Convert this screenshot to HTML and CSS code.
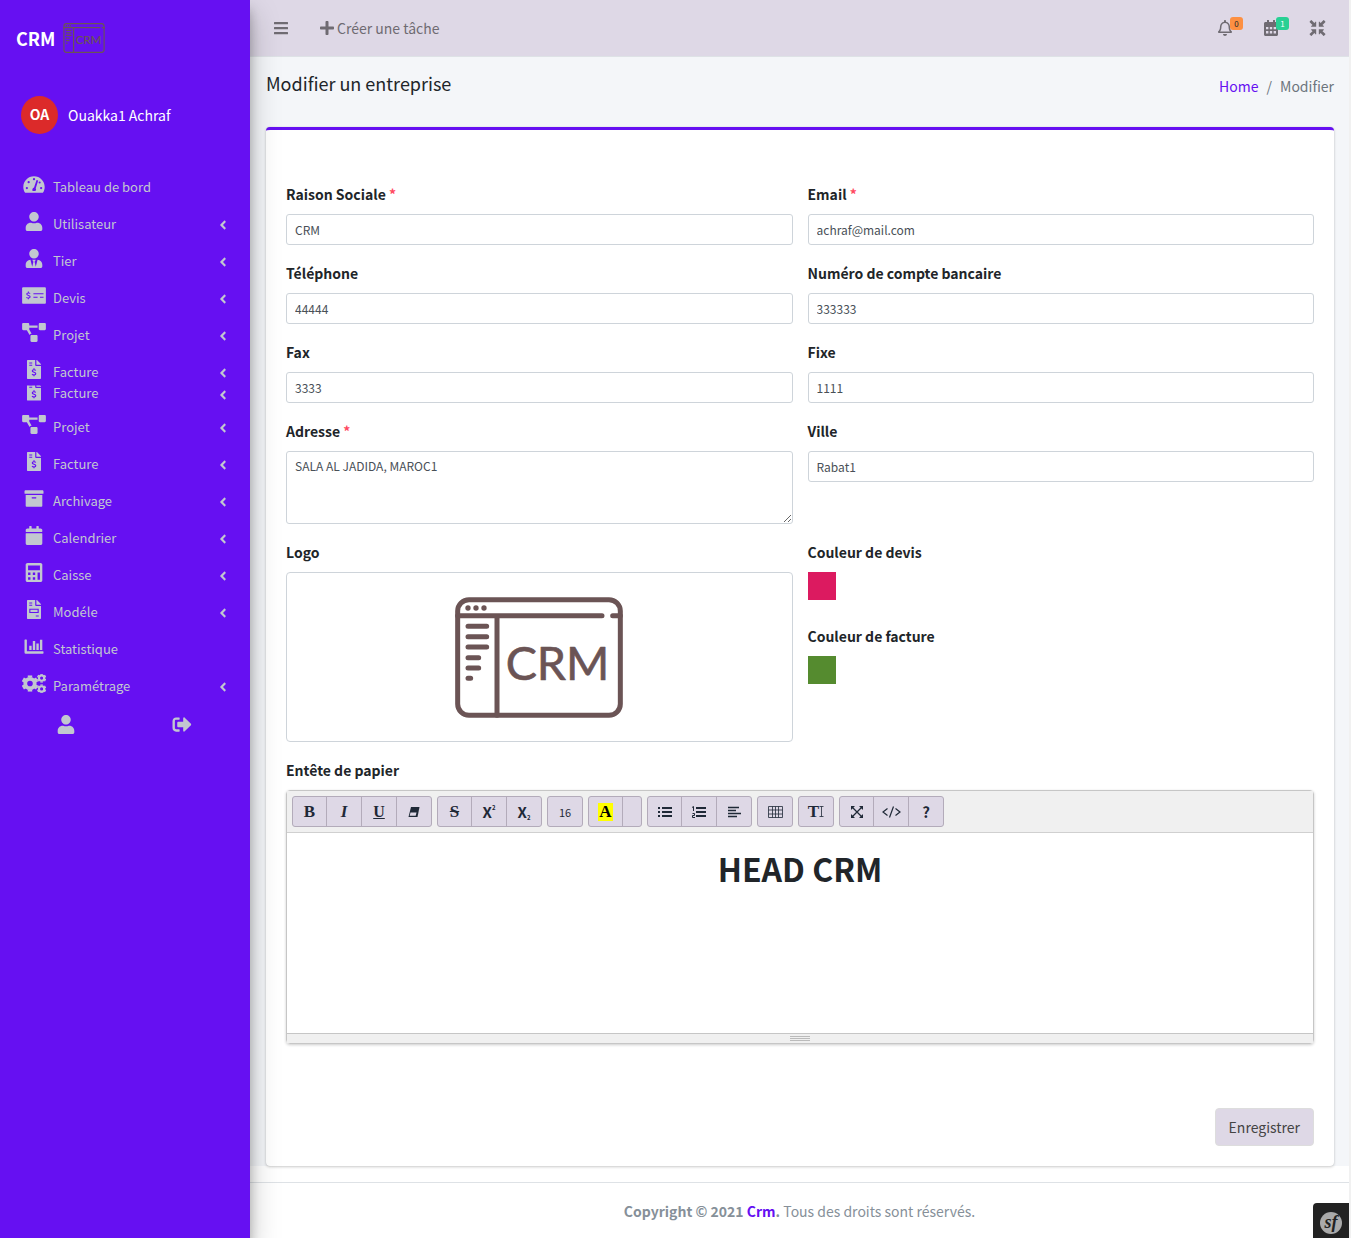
FILE: index.html
```html
<!DOCTYPE html>
<html lang="fr">
<head>
<meta charset="utf-8">
<meta name="viewport" content="width=device-width, initial-scale=1">
<title>CRM - Modifier un entreprise</title>
<link rel="stylesheet" href="styles.css">
</head>
<body>
<svg class="sprite" aria-hidden="true">
  <symbol id="logo-frame" viewBox="0 0 504 363">
    <g fill="none" stroke="currentColor" stroke-width="15" stroke-linecap="round">
      <rect x="8" y="8" width="488" height="347" rx="34"/>
      <path d="M8 56H441M473 56H496M126 56V355M39 88H95M39 119H95M39 150H95M39 182H71M39 213H71M39 244H47"/>
    </g>
    <g fill="currentColor"><circle cx="39" cy="33" r="8"/><circle cx="63" cy="33" r="8"/><circle cx="87" cy="33" r="8"/></g>
  </symbol>
  <symbol id="user" viewBox="0 0 448 512"><path d="M224 256c70.7 0 128-57.3 128-128S294.7 0 224 0 96 57.3 96 128s57.3 128 128 128zm89.6 32h-16.7c-22.2 10.2-46.9 16-72.9 16s-50.6-5.8-72.9-16h-16.7C60.2 288 0 348.2 0 422.4V464c0 26.5 21.5 48 48 48h352c26.5 0 48-21.5 48-48v-41.6c0-74.2-60.2-134.4-134.4-134.4z"/></symbol>
  <symbol id="user-tie" viewBox="0 0 448 512"><path d="M224 256c70.7 0 128-57.3 128-128S294.7 0 224 0 96 57.3 96 128s57.3 128 128 128zm95.8 32.6L272 480l-32-136 32-56h-96l32 56-32 136-47.8-191.4C56.9 292 0 350.3 0 422.4V464c0 26.5 21.5 48 48 48h352c26.5 0 48-21.5 48-48v-41.6c0-72.1-56.9-130.4-128.2-133.8z"/></symbol>
  <symbol id="gauge" viewBox="0 0 576 512"><path d="M288 32C128.94 32 0 160.94 0 320c0 52.8 14.25 102.26 39.06 144.8 5.61 9.62 16.3 15.2 27.44 15.2h443c11.14 0 21.83-5.58 27.44-15.2C561.75 422.26 576 372.8 576 320c0-159.06-128.94-288-288-288z"/><g class="hole"><circle cx="288" cy="112" r="30"/><circle cx="144" cy="192" r="30"/><circle cx="96" cy="352" r="30"/><circle cx="480" cy="352" r="30"/><circle cx="440" cy="200" r="28"/><path d="M357 135l44 14-66 206a62 62 0 0 1-10 77h-74a62 62 0 0 1 38-92z"/></g></symbol>
  <symbol id="check" viewBox="0 0 640 512"><path d="M608 32H32C14 32 0 46 0 64v384c0 18 14 32 32 32h576c18 0 32-14 32-32V64c0-18-14-32-32-32z"/><g class="hole-line" stroke-width="28"><path d="M214 205c-12-25-90-26-90 13 0 42 92 30 92 74 0 40-84 42-98 10M168 150v38M168 322v38"/><path d="M304 208H576M304 304H416M480 304H576"/></g></symbol>
  <symbol id="diagram" viewBox="0 0 640 512"><path d="M384 320H256c-17.67 0-32 14.33-32 32v128c0 17.67 14.33 32 32 32h128c17.67 0 32-14.33 32-32V352c0-17.67-14.33-32-32-32zM192 32c0-17.67-14.33-32-32-32H32C14.33 0 0 14.33 0 32v128c0 17.67 14.33 32 32 32h95.72l73.16 128.04C211.98 300.98 232.4 288 256 288h.28L192 175.51V128h224V64H192V32zM608 0H480c-17.67 0-32 14.33-32 32v128c0 17.67 14.33 32 32 32h128c17.67 0 32-14.33 32-32V32c0-17.67-14.33-32-32-32z"/></symbol>
  <symbol id="file" viewBox="0 0 384 512"><path d="M377 105L279.1 7c-4.500-4.500-10.600-7-17-7H256v128h128v-6.100c0-6.300-2.500-12.400-7-16.900zM224 136V0H24C10.700 0 0 10.700 0 24v464c0 13.300 10.700 24 24 24h336c13.300 0 24-10.700 24-24V160H248c-13.200 0-24-10.800-24-24z"/></symbol>
  <symbol id="invoice" viewBox="0 0 384 512"><use href="#file"/><g class="hole-line" stroke-width="28"><path d="M64 80h80M64 142h80"/><path d="M238 282c-14-28-92-26-92 14 0 42 94 28 94 74 0 42-86 40-98 8M192 224v40M192 396v40" stroke-width="32"/></g></symbol>
  <symbol id="model" viewBox="0 0 384 512"><use href="#file"/><g class="hole-line" stroke-width="30"><path d="M64 80h80M64 142h80M240 432h80M80 248H304V336H80z"/></g></symbol>
  <symbol id="archive" viewBox="0 0 512 512"><path d="M32 448c0 17.700 14.300 32 32 32h384c17.700 0 32-14.300 32-32V160H32v288zm160-212c0-6.600 5.400-12 12-12h104c6.600 0 12 5.400 12 12v8c0 6.600-5.400 12-12 12H204c-6.600 0-12-5.400-12-12v-8zM480 32H32C14.300 32 0 46.300 0 64v48c0 8.800 7.200 16 16 16h480c8.800 0 16-7.200 16-16V64c0-17.700-14.300-32-32-32z"/></symbol>
  <symbol id="calendar" viewBox="0 0 448 512"><path d="M12 192h424c6.600 0 12 5.400 12 12v260c0 26.500-21.500 48-48 48H48c-26.500 0-48-21.500-48-48V204c0-6.600 5.400-12 12-12zm436-44v-36c0-26.500-21.500-48-48-48h-48V12c0-6.600-5.400-12-12-12h-40c-6.600 0-12 5.400-12 12v52H160V12c0-6.600-5.400-12-12-12h-40c-6.600 0-12 5.400-12 12v52H48C21.500 64 0 85.500 0 112v36c0 6.600 5.400 12 12 12h424c6.600 0 12-5.400 12-12z"/></symbol>
  <symbol id="calendar-grid" viewBox="0 0 448 512"><path d="M0 140h448v60H0z"/><use href="#calendar"/><path class="hole" d="M64 220h76v76H64zM186 220h76v76h-76zM308 220h76v76h-76zM64 352h76v76H64zM186 352h76v76h-76zM308 352h76v76h-76z"/></symbol>
  <symbol id="calculator" viewBox="0 0 448 512"><path d="M400 0H48C22.400 0 0 22.400 0 48v416c0 25.600 22.400 48 48 48h352c25.600 0 48-22.400 48-48V48c0-25.600-22.400-48-48-48z"/><path class="hole" d="M64 64h320v128H64zM64 256h64v64H64zM192 256h64v64h-64zM64 384h64v64H64zM192 384h64v64h-64zM320 256h64v192h-64z"/></symbol>
  <symbol id="chart" viewBox="0 0 512 512"><path d="M16 64h32q16 0 16 16v304h432q16 0 16 16v32q0 16-16 16H32q-32 0-32-32V80q0-16 16-16zM128 236h64v116h-64zM224 108h64v244h-64zM320 172h64v180h-64zM416 76h64v276h-64z"/></symbol>
  <symbol id="gear" viewBox="-100 -100 200 200"><g fill="none" stroke="currentColor"><circle r="57" stroke-width="46"/><path d="M0-72V-100M0 72V100M62-36L87-50M-62 36L-87 50M62 36L87 50M-62-36L-87-50" stroke-width="54"/></g></symbol>
  <symbol id="cogs" viewBox="0 0 640 512"><use href="#gear" x="-10" y="34" width="444" height="444"/><use href="#gear" x="400" y="-14" width="250" height="250"/><use href="#gear" x="400" y="276" width="250" height="250"/></symbol>
  <symbol id="logout" viewBox="0 0 512 512"><path d="M497 273L329 441c-15 15-41 4.500-41-17v-96H152c-13.300 0-24-10.700-24-24v-96c0-13.300 10.700-24 24-24h136V88c0-21.400 25.900-32 41-17l168 168c9.300 9.400 9.300 24.600 0 34zM192 436v-40c0-6.600-5.400-12-12-12H96c-17.700 0-32-14.300-32-32V160c0-17.700 14.300-32 32-32h84c6.600 0 12-5.400 12-12V76c0-6.600-5.400-12-12-12H96c-53 0-96 43-96 96v192c0 53 43 96 96 96h84c6.600 0 12-5.400 12-12z"/></symbol>
  <symbol id="angle" viewBox="0 0 256 512"><path d="M31.700 239l136-136c9.400-9.400 24.600-9.400 33.900 0l22.600 22.600c9.400 9.400 9.400 24.600 0 33.900L127.900 256l96.400 96.400c9.400 9.400 9.400 24.600 0 33.900L201.700 409c-9.400 9.400-24.600 9.400-33.900 0l-136-136c-9.500-9.400-9.500-24.600-.1-34z"/></symbol>
  <symbol id="bars" viewBox="0 0 448 512"><path d="M16 60h416q16 0 16 16v40q0 16-16 16H16q-16 0-16-16V76q0-16 16-16zM16 220h416q16 0 16 16v40q0 16-16 16H16q-16 0-16-16v-40q0-16 16-16zM16 380h416q16 0 16 16v40q0 16-16 16H16q-16 0-16-16v-40q0-16 16-16z"/></symbol>
  <symbol id="plus" viewBox="0 0 448 512"><path d="M416 208H272V64c0-17.670-14.330-32-32-32h-32c-17.670 0-32 14.330-32 32v144H32c-17.670 0-32 14.330-32 32v32c0 17.670 14.330 32 32 32h144v144c0 17.670 14.330 32 32 32h32c17.670 0 32-14.330 32-32V304h144c17.670 0 32-14.330 32-32v-32c0-17.670-14.330-32-32-32z"/></symbol>
  <symbol id="bell" viewBox="0 0 448 512"><path d="M439.390 362.290c-19.320-20.760-55.470-51.990-55.470-154.290 0-77.700-54.480-139.900-127.940-155.160V32c0-17.670-14.320-32-31.980-32s-31.980 14.330-31.980 32v20.840C118.560 68.100 64.080 130.300 64.080 208c0 102.300-36.150 133.530-55.470 154.290-6 6.450-8.660 14.160-8.610 21.710.11 16.400 12.980 32 32.100 32h383.800c19.120 0 32-15.600 32.100-32 .05-7.550-2.610-15.270-8.610-21.710zM67.530 368c21.220-27.970 44.420-74.330 44.530-159.420 0-.2-.06-.38-.06-.58 0-61.860 50.140-112 112-112s112 50.140 112 112c0 .2-.06.38-.06.58.11 85.100 23.310 131.460 44.530 159.420H67.530zM224 512c35.320 0 63.970-28.650 63.970-64H160.030c0 35.350 28.650 64 63.970 64z"/></symbol>
  <symbol id="compress" viewBox="0 0 512 512"><g id="arrow-in"><path d="M214 298V446q0 24-20 10l-38-40-86 88q-12 12-24 0L8 466q-12-12 0-24l88-86-40-38q-14-20 10-20z"/></g><use href="#arrow-in" transform="matrix(-1 0 0 1 512 0)"/><use href="#arrow-in" transform="matrix(1 0 0 -1 0 512)"/><use href="#arrow-in" transform="matrix(-1 0 0 -1 512 512)"/></symbol>
</svg>

<div class="app">
  <aside class="sidebar">
    <a class="brand" href="#"><span>CRM</span><svg class="brand-logo" viewBox="0 0 504 363"><use href="#logo-frame"/><text class="logo-text" x="152" y="250">CRM</text></svg></a>
    <div class="profile"><span class="avatar">OA</span><a class="profile-name" href="#">Ouakka1 Achraf</a></div>
    <nav class="menu" aria-label="Menu principal">
      <a class="menu-item" href="#"><svg class="menu-icon"><use href="#gauge"/></svg><span>Tableau de bord</span></a>
      <a class="menu-item" href="#"><svg class="menu-icon"><use href="#user"/></svg><span>Utilisateur</span><svg class="caret"><use href="#angle"/></svg></a>
      <a class="menu-item" href="#"><svg class="menu-icon"><use href="#user-tie"/></svg><span>Tier</span><svg class="caret"><use href="#angle"/></svg></a>
      <a class="menu-item" href="#"><svg class="menu-icon"><use href="#check"/></svg><span>Devis</span><svg class="caret"><use href="#angle"/></svg></a>
      <a class="menu-item" href="#"><svg class="menu-icon"><use href="#diagram"/></svg><span>Projet</span><svg class="caret"><use href="#angle"/></svg></a>
      <a class="menu-item" href="#"><svg class="menu-icon"><use href="#invoice"/></svg><span>Facture</span><svg class="caret"><use href="#angle"/></svg></a>
      <a class="menu-item menu-item-compact" href="#"><svg class="menu-icon"><use href="#invoice"/></svg><span>Facture</span><svg class="caret"><use href="#angle"/></svg></a>
      <a class="menu-item" href="#"><svg class="menu-icon"><use href="#diagram"/></svg><span>Projet</span><svg class="caret"><use href="#angle"/></svg></a>
      <a class="menu-item" href="#"><svg class="menu-icon"><use href="#invoice"/></svg><span>Facture</span><svg class="caret"><use href="#angle"/></svg></a>
      <a class="menu-item" href="#"><svg class="menu-icon"><use href="#archive"/></svg><span>Archivage</span><svg class="caret"><use href="#angle"/></svg></a>
      <a class="menu-item" href="#"><svg class="menu-icon"><use href="#calendar"/></svg><span>Calendrier</span><svg class="caret"><use href="#angle"/></svg></a>
      <a class="menu-item" href="#"><svg class="menu-icon"><use href="#calculator"/></svg><span>Caisse</span><svg class="caret"><use href="#angle"/></svg></a>
      <a class="menu-item" href="#"><svg class="menu-icon"><use href="#model"/></svg><span>Modéle</span><svg class="caret"><use href="#angle"/></svg></a>
      <a class="menu-item" href="#"><svg class="menu-icon"><use href="#chart"/></svg><span>Statistique</span></a>
      <a class="menu-item" href="#"><svg class="menu-icon"><use href="#cogs"/></svg><span>Paramétrage</span><svg class="caret"><use href="#angle"/></svg></a>
    </nav>
    <div class="account">
      <a href="#" aria-label="Profil"><svg class="menu-icon"><use href="#user"/></svg></a>
      <a href="#" aria-label="Déconnexion"><svg class="menu-icon"><use href="#logout"/></svg></a>
    </div>
  </aside>

  <div class="page">
    <header class="topbar">
      <button class="icon-button" type="button" aria-label="Menu"><svg class="top-icon"><use href="#bars"/></svg></button>
      <a class="create" href="#"><svg class="top-icon"><use href="#plus"/></svg><span>Créer une tâche</span></a>
      <div class="topbar-actions">
        <button class="icon-button" type="button" aria-label="Notifications"><svg class="top-icon"><use href="#bell"/></svg><span class="badge badge-warning">0</span></button>
        <button class="icon-button" type="button" aria-label="Agenda"><svg class="top-icon"><use href="#calendar-grid"/></svg><span class="badge badge-success">1</span></button>
        <button class="icon-button" type="button" aria-label="Plein écran"><svg class="top-icon top-icon-wide"><use href="#compress"/></svg></button>
      </div>
    </header>

    <main class="content">
      <div class="content-header">
        <h1 class="title">Modifier un entreprise</h1>
        <nav class="breadcrumb" aria-label="Fil d'Ariane"><a href="#">Home</a><span>/</span><span>Modifier</span></nav>
      </div>

      <form class="card">
        <div class="form-grid">
          <div class="field"><label for="raison">Raison Sociale <span class="required">*</span></label><input class="control" id="raison" type="text" value="CRM"></div>
          <div class="field"><label for="email">Email <span class="required">*</span></label><input class="control" id="email" type="email" value="achraf@mail.com"></div>
          <div class="field"><label for="tel">Téléphone</label><input class="control" id="tel" type="text" value="44444"></div>
          <div class="field"><label for="compte">Numéro de compte bancaire</label><input class="control" id="compte" type="text" value="333333"></div>
          <div class="field"><label for="fax">Fax</label><input class="control" id="fax" type="text" value="3333"></div>
          <div class="field"><label for="fixe">Fixe</label><input class="control" id="fixe" type="text" value="1111"></div>
          <div class="field"><label for="adresse">Adresse <span class="required">*</span></label><textarea class="control control-area" id="adresse">SALA AL JADIDA, MAROC1</textarea></div>
          <div class="field"><label for="ville">Ville</label><input class="control" id="ville" type="text" value="Rabat1"></div>
          <div class="field"><span class="label">Logo</span><div class="logo-box"><svg class="logo-preview" viewBox="0 0 504 363"><use href="#logo-frame"/><text class="logo-text" x="152" y="250">CRM</text></svg></div></div>
          <div class="colors">
            <div class="field"><label for="c-devis">Couleur de devis</label><input class="swatch" id="c-devis" type="color" value="#dc1a60"></div>
            <div class="field"><label for="c-facture">Couleur de facture</label><input class="swatch" id="c-facture" type="color" value="#558b2f"></div>
          </div>
        </div>

        <div class="field">
          <span class="label">Entête de papier</span>
          <div class="editor">
            <div class="toolbar" role="toolbar">
              <div class="group">
                <button type="button" class="tool serif"><b>B</b></button><button type="button" class="tool serif"><i>I</i></button><button type="button" class="tool serif"><u>U</u></button><button type="button" class="tool" aria-label="Effacer"><svg width="12" height="12" viewBox="0 0 12 12"><path d="M3 1h8.500L9.500 11H.5z" fill="currentColor"/><path d="M2.500 6.500h6L7.700 9.800H1.700z" fill="#ded8e6"/></svg></button>
              </div>
              <div class="group">
                <button type="button" class="tool serif"><s>S</s></button><button type="button" class="tool script">X<sup>2</sup></button><button type="button" class="tool script">X<sub>2</sub></button>
              </div>
              <div class="group"><button type="button" class="tool size">16</button></div>
              <div class="group"><button type="button" class="tool serif"><mark>A</mark></button><button type="button" class="tool tool-narrow" aria-label="Plus de couleurs"></button></div>
              <div class="group">
                <button type="button" class="tool" aria-label="Liste"><svg width="14" height="12" viewBox="0 0 14 12"><path d="M0 2h2M0 6h2M0 10h2M4 2h10M4 6h10M4 10h10" stroke="currentColor" stroke-width="2"/></svg></button><button type="button" class="tool" aria-label="Liste numérotée"><svg width="14" height="12" viewBox="0 0 14 12"><path d="M4 2h10M4 6h10M4 10h10" stroke="currentColor" stroke-width="2"/><path d="M0 1.500L1.500.5V5M.5 7.500h2v2h-2v2h2.500" fill="none" stroke="currentColor"/></svg></button><button type="button" class="tool" aria-label="Paragraphe"><svg width="13" height="12" viewBox="0 0 13 12"><path d="M0 1.500h11M0 4.500h8M0 7.500h13M0 10.500h9" stroke="currentColor" stroke-width="1.500"/></svg></button>
              </div>
              <div class="group"><button type="button" class="tool" aria-label="Tableau"><svg width="15" height="12" viewBox="0 0 15 12"><path d="M.5.5h14v11H.5zM.5 4h14M.5 8h14M4.500.5v11M7.500.5v11M10.500.5v11" fill="none" stroke="currentColor" stroke-width=".8"/></svg></button></div>
              <div class="group"><button type="button" class="tool serif" aria-label="Hauteur de ligne"><b>T</b><svg width="5" height="11" viewBox="0 0 5 11"><path d="M.5.5h4M2.500.5v10M.5 10.500h4" fill="none" stroke="currentColor" stroke-width=".8"/></svg></button></div>
              <div class="group">
                <button type="button" class="tool" aria-label="Plein écran"><svg width="12" height="12" viewBox="0 0 12 12"><path d="M1.500 1.500l9 9M10.500 1.500l-9 9" stroke="currentColor" stroke-width="1.300"/><path d="M0 0h4L0 4zM12 0v4L8 0zM0 12V8l4 4zM12 12H8l4-4z" fill="currentColor"/></svg></button><button type="button" class="tool" aria-label="Code source"><svg width="19" height="12" viewBox="0 0 19 12"><path d="M5.500 2.500L1 6l4.500 3.500M13.500 2.500L18 6l-4.500 3.500M11.500.5l-4 11" fill="none" stroke="currentColor" stroke-width="1.200"/></svg></button><button type="button" class="tool help">?</button>
              </div>
            </div>
            <div class="editable" contenteditable="true"><h2>HEAD CRM</h2></div>
            <div class="resizer"><span class="grip"></span></div>
          </div>
        </div>

        <div class="form-actions"><button class="submit" type="submit">Enregistrer</button></div>
      </form>
    </main>

    <footer class="footer"><b>Copyright © 2021 <a href="#">Crm</a>.</b> Tous des droits sont réservés.</footer>
  </div>
</div>
<button class="debug" type="button" aria-label="Symfony"><span>sf</span></button>
</body>
</html>
```
FILE: styles.css
```css
* { box-sizing: border-box; }

:root {
  --violet: #6610f2;
  --lilac: #ded8e6;
  --line: #ced4da;
}

body {
  margin: 0;
  background: #fff;
  color: #212529;
  font: 14px/24px "Noto Sans CJK SC", "Open Sans", sans-serif;
}

a { color: var(--violet); text-decoration: none; }
button, input, textarea { font: inherit; color: inherit; }
svg { display: block; fill: currentColor; }
.sprite { position: absolute; width: 0; height: 0; }
.hole { fill: var(--hole); }
.hole-line { fill: none; stroke: var(--hole); }

.logo-text {
  font: 400 140px Lato, sans-serif;
  fill: currentColor;
  stroke: currentColor;
  stroke-width: 2px;
  stroke-linejoin: round;
}

.app {
  display: grid;
  grid-template-columns: 250px minmax(0, 1fr);
  min-height: 100vh;
}

/* Sidebar */
.sidebar {
  --hole: var(--violet);
  position: relative;
  z-index: 1;
  background: var(--violet);
  color: #c2c7d0;
  box-shadow: 0 14px 28px rgba(0, 0, 0, .25), 0 10px 10px rgba(0, 0, 0, .22);
}

.brand {
  display: flex;
  align-items: center;
  gap: 8px;
  height: 76px;
  padding-left: 16px;
  color: #fff;
  font-size: 18px;
  font-weight: 700;
}

.brand-logo { width: 42px; height: 30px; color: #6b5455; }

.profile {
  display: flex;
  align-items: center;
  gap: 10px;
  height: 78px;
  padding-left: 21px;
}

.avatar {
  width: 37px;
  height: 38px;
  border-radius: 50%;
  background: #dc2a2a;
  color: #fff;
  font-weight: 700;
  line-height: 37px;
  text-align: center;
}

.profile-name { color: #fff; }
.menu { padding-top: 14px; }

.menu-item {
  display: flex;
  align-items: center;
  gap: 6px;
  height: 37px;
  padding: 0 21px;
  color: #c2c7d0;
  font-size: 13px;
}

.menu-item-compact { height: 22px; margin: -8px 0 4px; }
.menu-item-compact .menu-icon { clip-path: inset(4px 0 0); }
.menu-icon { width: 26px; height: 19px; margin-bottom: 4px; }
.caret { width: 12px; height: 14px; margin: 3px 0 0 auto; }

.account {
  display: grid;
  grid-template-columns: 1fr 1fr;
  justify-items: center;
  padding: 11px 10px 0 8px;
}

.account a { color: #c2c7d0; }

/* Top bar */
.page {
  display: flex;
  flex-direction: column;
  min-width: 0;
  border-right: 2px solid #f1f1f1;
}

.topbar {
  --hole: var(--lilac);
  display: flex;
  align-items: center;
  height: 57px;
  padding: 0 23px;
  border-bottom: 1px solid #dee2e6;
  background: var(--lilac);
  color: #6f6b72;
}

.top-icon { width: 16px; height: 16px; }
.top-icon-wide { width: 17px; }
.icon-button { position: relative; padding: 0; border: 0; background: none; }

.create {
  display: flex;
  align-items: center;
  gap: 2px;
  margin-left: 30px;
  color: inherit;
}

.topbar-actions { display: flex; gap: 30px; margin-left: auto; }

.badge {
  position: absolute;
  top: -3px;
  left: 13px;
  width: 13px;
  height: 13px;
  border-radius: 3px;
  font-size: 8px;
  line-height: 13px;
  text-align: center;
}

.badge-warning { background: #fd9042; color: #212529; }
.badge-success { background: #28d094; color: #fff; }

/* Content */
.content {
  flex: 1;
  padding: 0 15px 0 16px;
  background: #f4f6f9;
}

.content-header {
  display: flex;
  align-items: center;
  justify-content: space-between;
  height: 70px;
}

.title { margin: 0 0 18px; font-size: 18px; font-weight: 400; }
.breadcrumb { display: flex; gap: 8px; margin-bottom: 12px; color: #6c757d; }

.card {
  padding: 52px 20px 20px;
  border-top: 3px solid var(--violet);
  border-radius: 4px;
  background: #fff;
  box-shadow: 0 0 1px rgba(0, 0, 0, .13), 0 1px 3px rgba(0, 0, 0, .2);
}

.form-grid {
  display: grid;
  grid-template-columns: repeat(2, minmax(0, 1fr));
  gap: 16px 15px;
  margin-bottom: 16px;
}

.field { display: grid; gap: 8px; align-content: start; }
.field label, .label { font-weight: 700; }
.required { color: #ff4961; }

.control {
  width: 100%;
  height: 31px;
  padding: 4px 8px;
  border: 1px solid var(--line);
  border-radius: 3px;
  background: #fff;
  color: #495057;
  font-size: 12px;
  line-height: 20px;
}

.control-area { display: block; height: 73px; resize: vertical; }

.logo-box {
  display: grid;
  place-items: center;
  height: 170px;
  border: 1px solid var(--line);
  border-radius: 4px;
}

.logo-preview { width: 168px; height: 121px; color: #6b5455; }
.colors { display: grid; gap: 24px; align-content: start; }

.swatch { width: 28px; height: 28px; padding: 0; border: 0; background: none; }
.swatch::-webkit-color-swatch-wrapper { padding: 0; }
.swatch::-webkit-color-swatch { border: 0; }

/* Rich text editor */
.editor {
  border: 1px solid #c6c6c6;
  border-radius: 4px;
  box-shadow: 0 1px 3px rgba(0, 0, 0, .2);
}

.toolbar {
  --tool-line: #b3abba;
  display: flex;
  flex-wrap: wrap;
  gap: 5px;
  padding: 5px;
  border-bottom: 1px solid #d0d0d0;
  background: #f0f0f0;
}

.group {
  display: flex;
  border: 1px solid var(--tool-line);
  border-radius: 3px;
  background: var(--lilac);
}

.tool {
  display: flex;
  align-items: center;
  justify-content: center;
  width: 33px;
  height: 29px;
  padding: 0;
  border: 0;
  background: none;
  color: #1f2937;
}

.tool:only-child { width: 34px; }
.tool + .tool { width: 35px; border-left: 1px solid var(--tool-line); }
.tool + .tool-narrow { width: 19px; }
.serif { font: 700 17px "Liberation Serif", serif; }
.serif mark { padding: 0 1px; background: #ff0; line-height: 18px; }
.serif u { font-size: 16px; text-decoration-thickness: 1px; }
.script { font-size: 15px; font-weight: 700; }
.script sup, .script sub { font-size: 6px; line-height: 8px; }
.script sup { align-self: flex-start; margin-top: 7px; }
.script sub { align-self: flex-end; margin-bottom: 4px; }
.size { font-size: 11px; }
.help { font-weight: 700; font-size: 15px; }

.editable { height: 200px; padding: 8px; outline: 0; text-align: center; }
.editable h2 { margin: 5px 0; font-size: 32px; line-height: 44px; }

.resizer {
  display: grid;
  place-items: center;
  height: 10px;
  border-top: 1px solid #c6c6c6;
  background: #f0f0f0;
}

.grip {
  width: 20px;
  height: 5px;
  border: solid #bbb;
  border-width: 1px 0;
  background: linear-gradient(#bbb, #bbb) center / 100% 1px no-repeat;
}

.form-actions { display: flex; justify-content: flex-end; padding-top: 64px; }

.submit {
  height: 38px;
  padding: 0 13px;
  border: 1px solid #ddd;
  border-radius: 4px;
  background: var(--lilac);
  color: #444;
}

.footer {
  margin-top: 16px;
  padding: 16px;
  border-top: 1px solid #dee2e6;
  color: #869099;
  text-align: center;
}

.debug {
  position: fixed;
  right: 2px;
  bottom: 0;
  display: grid;
  place-items: center;
  width: 36px;
  height: 35px;
  padding: 4px 0 0;
  border: 0;
  border-radius: 4px 0 0;
  background: #222;
}

.debug span {
  width: 22px;
  height: 22px;
  border-radius: 50%;
  background: #aaa;
  color: #222;
  font: italic 700 18px/20px "Liberation Serif", serif;
}
```
